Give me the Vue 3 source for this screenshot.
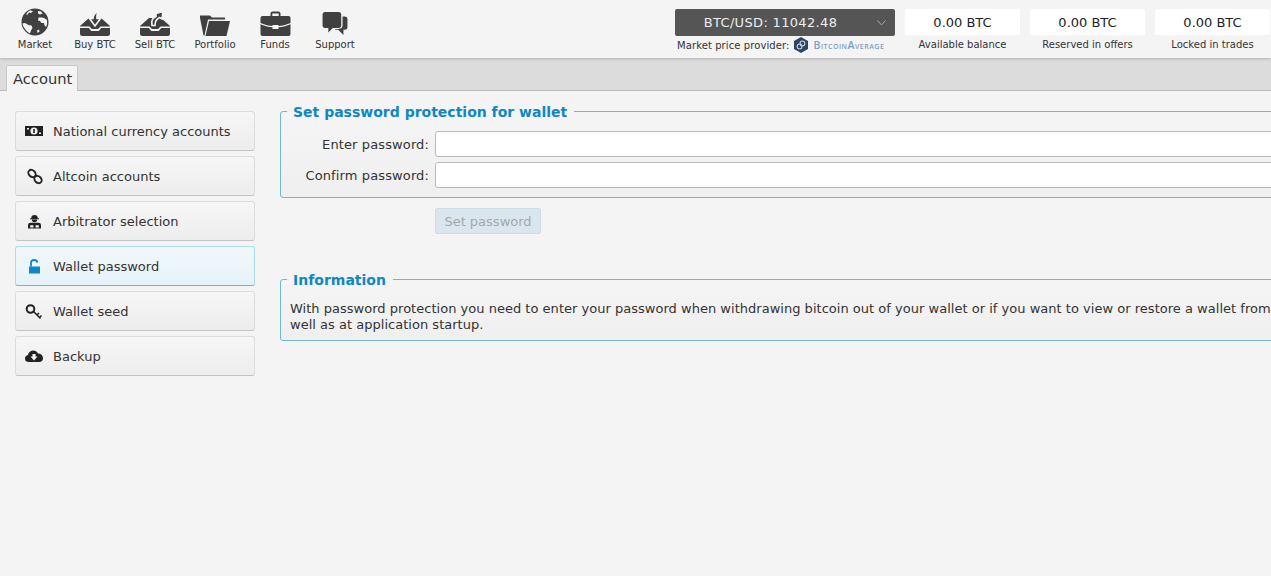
<script setup>
import { ref } from 'vue';

const dark = '#404040';
const bg = '#f4f4f4';

const trayBand = 'M0 16.5H9.5L12 19H18L20.5 16.5H30V18H21.2L18.7 21H11.3L8.8 18H0z';

const navItems = [
    {
        label: 'Market', w: 28, h: 28, view: '0 0 28 28',
        shapes: [
            { d: 'M14 0.5a13.5 13.5 0 1 0 0 27a13.5 13.5 0 1 0 0-27z', fill: dark },
            { d: 'M9 2.2L12 3.2L10 5L8 4.6L6.5 6.8L5 6.4Q6.5 3.6 9 2.2z', fill: bg },
            { d: 'M17 3L20 3.6L21.5 5.6L19 6.5L17 5.5z', fill: bg },
            { d: 'M17.5 9.5L20.5 9.5L23 10L26 12Q26.6 16 25.2 19L23.5 17.5L23 15L20.5 15L19 13L17 12.5z', fill: bg },
            { d: 'M1.4 15.5L4 15L7.5 17L10.5 17.5L11.5 20L10 22.5L9 25.2L7.5 24.4Q2.6 21 1.4 15.5z', fill: bg },
            { d: 'M16 22.5L18 21.5L18.5 23.5L16.5 25z', fill: bg }
        ]
    },
    {
        label: 'Buy BTC', w: 30, h: 26, view: '0 0 30 26',
        shapes: [
            { d: 'M0 16L9 8H21L30 16V23.5Q30 26 27.5 26H2.5Q0 26 0 23.5z', fill: dark },
            { d: trayBand, fill: bg },
            { d: 'M9.5 8.5H13Q13 4 18.5 0.5Q16.5 4.5 17 8.5H20.5L15 16z', fill: dark, stroke: bg, sw: 1.6 }
        ]
    },
    {
        label: 'Sell BTC', w: 30, h: 26, view: '0 0 30 26',
        shapes: [
            { d: 'M0 16L9 8H21L30 16V23.5Q30 26 27.5 26H2.5Q0 26 0 23.5z', fill: dark },
            { d: trayBand, fill: bg },
            { d: 'M12 15.5Q10.5 8.5 16 6.5V3.5L23 1.5L22 9L19.5 7.5Q15 9.5 15 15.5z', fill: dark, stroke: bg, sw: 1.6 }
        ]
    },
    {
        label: 'Portfolio', w: 30, h: 21, view: '0 0 30 21',
        shapes: [
            { d: 'M0 0.5H10L12 2.5H25V4.5H8L4.5 20.5H3.5L0 3z', fill: dark },
            { d: 'M9 6H30L26.5 21H5.5z', fill: dark }
        ]
    },
    {
        label: 'Funds', w: 31, h: 25, view: '0 0 30 25',
        shapes: [
            { d: 'M10 5V2.5Q10 0.5 12 0.5H18Q20 0.5 20 2.5V5H18.2V2.4H11.8V5z', fill: dark },
            { d: 'M2 5H28Q30 5 30 7V12Q23 15 18 15V14H12V15Q7 15 0 12V7Q0 5 2 5z', fill: dark },
            { d: 'M0 13.3Q7 16.3 12 16.3V18H18V16.3Q23 16.3 30 13.3V23Q30 25 28 25H2Q0 25 0 23z', fill: dark }
        ]
    },
    {
        label: 'Support', w: 28, h: 24, view: '0 0 28 27',
        shapes: [
            { d: 'M3 0H18Q21 0 21 3V15Q21 18 18 18H11.5L6.5 23V18H3Q0 18 0 15V3Q0 0 3 0z', fill: dark },
            { d: 'M22.5 5H25Q28 5 28 8V17Q28 20 25 20H23.5V26L17.5 20H13.5L15 19H18Q22.5 19 22.5 15z', fill: dark }
        ]
    }
];

const balances = [
    { value: '0.00 BTC', label: 'Available balance' },
    { value: '0.00 BTC', label: 'Reserved in offers' },
    { value: '0.00 BTC', label: 'Locked in trades' }
];

const menu = [
    {
        label: 'National currency accounts',
        shapes: [
            { d: 'M0 3H18V13H0z M2 5H4V6.5H2z M14 9.5H16V11H14z M9 4.4a3.6 3.6 0 1 0 0 7.2a3.6 3.6 0 1 0 0-7.2z', fill: '#222', rule: 'evenodd' },
            { d: 'M8.2 6H9.8V10H8.2z', fill: '#222' }
        ]
    },
    {
        label: 'Altcoin accounts',
        shapes: [
            { d: 'M4.2 2.7A4 2.8 45 1 0 9.8 8.3A4 2.8 45 1 0 4.2 2.7z', fill: 'none', stroke: '#222', sw: 1.8 },
            { d: 'M10.2 8.7A4 2.8 45 1 0 15.8 14.3A4 2.8 45 1 0 10.2 8.7z', fill: 'none', stroke: '#222', sw: 1.8 }
        ]
    },
    {
        label: 'Arbitrator selection',
        shapes: [
            { d: 'M9.5 2a3.2 3.2 0 0 1 3.2 3.2H14V6.2H5V5.2H6.3A3.2 3.2 0 0 1 9.5 2z', fill: '#222' },
            { d: 'M6.8 6.6H12.2A2.7 2.7 0 0 1 6.8 6.6z', fill: '#222' },
            { d: 'M3 15.5V12Q3 9.8 5.5 9.8H13.5Q16 9.8 16 12V15.5z', fill: '#222' },
            { d: 'M5.2 12.2H8.4V14.6H5.2z M10.6 12.2H13.8V14.6H10.6z', fill: bg }
        ]
    },
    {
        label: 'Wallet password',
        active: true,
        shapes: [
            { d: 'M4 8.5H15V15.5H4z', fill: '#0f87c3' },
            { d: 'M6 8.5V4.6Q6 2 9 2Q12 2 12.4 4.6', fill: 'none', stroke: '#0f87c3', sw: 1.8 }
        ]
    },
    {
        label: 'Wallet seed',
        shapes: [
            { d: 'M5.5 2.2a3.8 3.8 0 1 0 0 7.6a3.8 3.8 0 1 0 0-7.6z', fill: 'none', stroke: '#222', sw: 2 },
            { d: 'M8.3 8.3L15.5 15.5 M12 12L14 10 M14.5 14.5L16.5 12.5', fill: 'none', stroke: '#222', sw: 1.6 }
        ]
    },
    {
        label: 'Backup',
        shapes: [
            { d: 'M4 14Q0 14 0 10.5Q0 7.5 3 7Q3.5 3 8 2.5Q11.5 2.5 13 5.5Q17.5 5.5 18 10Q18 14 14 14z', fill: '#222' },
            { d: 'M7.5 6H10.5V8.5H12.5L9 12.5L5.5 8.5H7.5z', fill: bg }
        ]
    }
];

const password = ref('');
const confirm = ref('');
</script>

<template>
    <div class="app">
        <header class="top">
            <nav class="nav">
                <a v-for="item in navItems" :key="item.label" class="nav-item">
                    <span class="nav-icon">
                        <svg :width="item.w" :height="item.h" :viewBox="item.view">
                            <path
                                v-for="(s, i) in item.shapes"
                                :key="i"
                                :d="s.d"
                                :fill="s.fill"
                                :stroke="s.stroke"
                                :stroke-width="s.sw"
                            />
                        </svg>
                    </span>
                    <span class="nav-label">{{ item.label }}</span>
                </a>
            </nav>
            <div class="right">
                <div class="price-col">
                    <div class="price">
                        <span>BTC/USD: 11042.48</span>
                        <svg class="chevron" width="9" height="6" viewBox="0 0 9 6">
                            <path d="M0.5 0.5L4.5 5L8.5 0.5" fill="none" stroke="#aaa" stroke-width="1" />
                        </svg>
                    </div>
                    <div class="provider">
                        <span>Market price provider:</span>
                        <svg width="14" height="16" viewBox="0 0 14 16">
                            <path d="M7 0L14 4V12L7 16L0 12V4z" fill="#2d4463" />
                            <circle cx="5.6" cy="9.4" r="2.4" fill="none" stroke="#c5d3e4" stroke-width="1.1" />
                            <circle cx="8.4" cy="6.4" r="2.4" fill="none" stroke="#c5d3e4" stroke-width="1.1" />
                        </svg>
                        <span class="provider-name">BitcoinAverage</span>
                    </div>
                </div>
                <div v-for="b in balances" :key="b.label" class="balance">
                    <div class="balance-value">{{ b.value }}</div>
                    <div class="balance-label">{{ b.label }}</div>
                </div>
            </div>
        </header>

        <div class="tabs">
            <div class="tab">Account</div>
        </div>

        <main class="content">
            <aside class="menu">
                <button v-for="m in menu" :key="m.label" class="menu-btn" :class="{ active: m.active }">
                    <span class="menu-icon">
                        <svg width="18" height="17" viewBox="0 0 18 17">
                            <path
                                v-for="(s, i) in m.shapes"
                                :key="i"
                                :d="s.d"
                                :fill="s.fill"
                                :fill-rule="s.rule"
                                :stroke="s.stroke"
                                :stroke-width="s.sw"
                            />
                        </svg>
                    </span>
                    <span>{{ m.label }}</span>
                </button>
            </aside>

            <section class="panel">
                <fieldset class="group">
                    <legend>Set password protection for wallet</legend>
                    <div class="field">
                        <label>Enter password:</label>
                        <input v-model="password" type="password" />
                    </div>
                    <div class="field">
                        <label>Confirm password:</label>
                        <input v-model="confirm" type="password" />
                    </div>
                </fieldset>

                <button class="set-btn" disabled>Set password</button>

                <fieldset class="group info">
                    <legend>Information</legend>
                    <p>
                        With password protection you need to enter your password when withdrawing bitcoin out of your wallet or if you want to view or restore a wallet from<br />
                        well as at application startup.
                    </p>
                </fieldset>
            </section>
        </main>
    </div>
</template>

<style>
html,
body {
    margin: 0;
    height: 100%;
    overflow: hidden;
    background: #f4f4f4;
}
</style>

<style scoped>
.app {
    width: 1271px;
    height: 576px;
    overflow: hidden;
    font-family: "DejaVu Sans", Verdana, sans-serif;
    color: #333;
    background: #f4f4f4;
}

.top {
    position: relative;
    z-index: 1;
    display: flex;
    justify-content: space-between;
    height: 58px;
    padding-left: 5px;
    box-sizing: border-box;
    background: #f4f4f4;
    box-shadow: 0 1px 3px rgba(0, 0, 0, 0.18);
}

.nav {
    display: flex;
}

.nav-item {
    display: flex;
    flex-direction: column;
    align-items: center;
    width: 60px;
    padding-top: 10px;
}

.nav-icon {
    display: flex;
    align-items: flex-end;
    height: 26px;
}

.nav-label {
    margin-top: 2px;
    font-size: 10px;
    line-height: 14px;
    color: #333;
}

.right {
    display: flex;
    gap: 10px;
    padding: 9px 1px 0 0;
}

.price-col {
    width: 220px;
}

.price {
    position: relative;
    display: flex;
    align-items: center;
    justify-content: center;
    height: 27px;
    padding-right: 29px;
    box-sizing: border-box;
    border-radius: 2px;
    background: #555;
    color: #eee;
    font-size: 13px;
    letter-spacing: 0.33px;
}

.chevron {
    position: absolute;
    right: 9px;
    top: 11px;
}

.provider {
    display: flex;
    align-items: center;
    gap: 5px;
    height: 18px;
    padding-left: 2px;
    font-size: 10px;
    letter-spacing: 0.09px;
    color: #333;
}

.provider-name {
    font-family: "Open Sans", sans-serif;
    font-size: 10.5px;
    font-weight: 600;
    font-variant: small-caps;
    letter-spacing: 0.5px;
    color: #7f9fc4;
}

.balance {
    width: 115px;
    text-align: center;
}

.balance-value {
    height: 26px;
    margin-bottom: 1px;
    border-radius: 2px;
    background: #fff;
    font-size: 13px;
    line-height: 27px;
    color: #222;
}

.balance-label {
    font-size: 10px;
    line-height: 18px;
    color: #333;
}

.tabs {
    display: flex;
    align-items: flex-end;
    height: 33px;
    padding-left: 6px;
    box-sizing: border-box;
    background: #dcdcdc;
    border-bottom: 1px solid #bbb;
}

.tab {
    height: 26px;
    margin-bottom: -1px;
    padding: 0 5px 0 6px;
    box-sizing: border-box;
    border: 1px solid #c8c8c8;
    border-bottom: none;
    border-radius: 2px 2px 0 0;
    background: #f4f4f4;
    font-size: 14.7px;
    line-height: 26px;
    color: #333;
}

.content {
    display: flex;
    padding: 11px 0 0 15px;
}

.menu {
    display: flex;
    flex-direction: column;
    gap: 5px;
    flex: none;
    width: 240px;
    margin-top: 9px;
}

.menu-btn {
    display: flex;
    align-items: center;
    height: 40px;
    padding: 0 0 0 9px;
    border: 1px solid #dcdcdc;
    border-bottom-color: #c4c4c4;
    border-radius: 3px;
    background: linear-gradient(#f6f6f6, #ededed);
    font-family: inherit;
    font-size: 13px;
    color: #333;
    text-align: left;
}

.menu-btn.active {
    border-color: #a9dcf0;
    border-bottom-color: #78b3c9;
    background: linear-gradient(#f3f7f9, #e5f3f9);
}

.menu-icon {
    display: flex;
    width: 28px;
}

.panel {
    flex: none;
    width: 1100px;
    margin-left: 25px;
}

.group {
    margin: 0;
    padding: 0 0 9px;
    border: 1px solid #6fb7d4;
    border-radius: 3px;
    background: linear-gradient(#f5f5f5, #efefef);
}

.group legend {
    margin-left: 6px;
    padding: 2px 7px 0 6px;
    font-size: 14px;
    font-weight: 700;
    line-height: 16px;
    color: #0f87c3;
}

.field {
    display: flex;
    align-items: center;
    gap: 6px;
    margin-top: 5px;
}

.field:first-of-type {
    margin-top: 11px;
}

.field label {
    width: 148px;
    font-size: 13px;
    letter-spacing: 0.12px;
    text-align: right;
    color: #333;
}

.field input {
    flex: 1;
    height: 26px;
    box-sizing: border-box;
    border: 1px solid #bbb;
    border-radius: 3px;
    background: #fff;
    outline: none;
}

.set-btn {
    display: block;
    width: 106px;
    height: 26px;
    margin: 10px 0 0 155px;
    padding: 0;
    border: 1px solid #cddde6;
    border-radius: 2px;
    background: #d9e6ee;
    font-family: inherit;
    font-size: 13px;
    color: #a3a9ad;
}

.info {
    margin-top: 36px;
    padding-bottom: 7px;
}

.info p {
    margin: 13px 0 0 9px;
    font-size: 13px;
    line-height: 16px;
    letter-spacing: 0.02px;
    white-space: nowrap;
    color: #333;
}
</style>
